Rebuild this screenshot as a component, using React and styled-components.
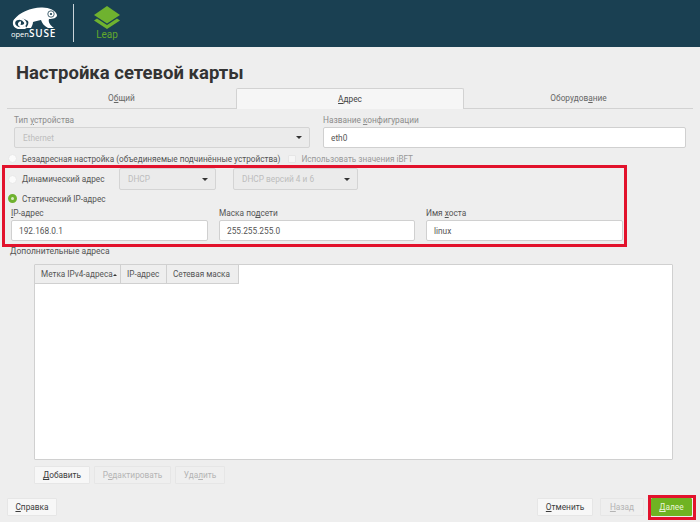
import React from 'react';
import styled, { createGlobalStyle } from 'styled-components';

const GlobalStyle = createGlobalStyle`
  html, body {
    margin: 0;
    padding: 0;
    background: #eeeeee;
    font-family: Roboto, "Noto Sans", sans-serif;
    color: #444;
  }
  * { box-sizing: border-box; }
`;

const Page = styled.div`
  position: relative;
  width: 700px;
  height: 522px;
  overflow: hidden;
  background: #eeeeee;
`;

const Header = styled.header`
  height: 47px;
  background: #1a4052;
  display: flex;
  align-items: flex-start;
  padding: 4px 0 0 11px;
`;

const SuseLogo = styled.div`
  width: 50px;
  padding-top: 3px;
  display: flex;
  flex-direction: column;
  align-items: flex-start;
`;

const SuseMark = styled.div`
  padding-left: 1px;
  height: 22px;
`;

const SuseWord = styled.div`
  font-family: "Open Sans", sans-serif;
  font-size: 7.5px;
  line-height: 8px;
  color: #fff;
  white-space: nowrap;
  b { font-size: 10px; font-weight: 600; letter-spacing: 0.8px; }
`;

const Divider = styled.div`
  width: 1px;
  height: 38px;
  background: #c9d3d8;
  margin-left: 12px;
`;

const LeapLogo = styled.div`
  margin-left: 20px;
  margin-top: 2px;
  width: 26px;
  display: flex;
  flex-direction: column;
  align-items: center;
`;

const LeapWord = styled.div`
  font-size: 10px;
  line-height: 12px;
  color: #62a82c;
`;

const Title = styled.h1`
  margin: 0;
  padding: 14px 0 0 16px;
  height: 41px;
  font-size: 18.5px;
  line-height: 25px;
  font-weight: 700;
  color: #333;
`;

const Tabs = styled.div`
  display: flex;
  height: 21px;
  margin: 0 7px;
`;

const Tab = styled.div`
  flex: ${({ $width }) => `0 0 ${$width}px`};
  display: flex;
  align-items: center;
  justify-content: center;
  font-size: 8.3px;
  color: ${({ $active }) => ($active ? '#444' : '#666')};
  background: ${({ $active }) => ($active ? '#f6f6f6' : 'transparent')};
  border: 1px solid #d2d2d2;
  border-width: ${({ $active }) => ($active ? '1px 1px 0 1px' : '0 0 1px 0')};
  border-radius: ${({ $active }) => ($active ? '2px 2px 0 0' : '0')};
`;

const Mn = styled.span`
  text-decoration: underline;
`;

const TopGrid = styled.div`
  display: flex;
  gap: 13px;
  padding: 5px 14px 0;
`;

const Field = styled.div`
  display: flex;
  flex-direction: column;
  width: ${({ $width }) => $width}px;
`;

const Label = styled.label`
  height: 13px;
  font-size: 8.3px;
  line-height: 13px;
  white-space: nowrap;
  color: ${({ $muted }) => ($muted ? '#8c8c8c' : '#555')};
`;

const TextBox = styled.div`
  height: 21px;
  background: #fff;
  border: 1px solid #d0d0d0;
  border-radius: 2px;
  display: flex;
  align-items: center;
  padding-left: 7px;
  font-size: 8.3px;
  color: #555;
`;

const SelectBox = styled.div`
  height: ${({ $height }) => $height || 21}px;
  width: ${({ $width }) => ($width ? `${$width}px` : 'auto')};
  background: #ebebeb;
  border: 1px solid #d4d4d4;
  border-radius: 2px;
  display: flex;
  align-items: center;
  justify-content: space-between;
  padding: 0 7px 0 8px;
  font-size: 8.3px;
  color: #bdbdbd;
`;

const Caret = styled.span`
  width: 0;
  height: 0;
  border-left: 3px solid transparent;
  border-right: 3px solid transparent;
  border-top: 3px solid #333;
`;

const OptionRow = styled.div`
  display: flex;
  align-items: center;
  height: ${({ $height }) => $height}px;
  padding: ${({ $pad }) => $pad || 0}px 0 0 8px;
`;

const Radio = styled.span`
  flex: none;
  width: 9px;
  height: 9px;
  border-radius: 50%;
  background: ${({ $on }) => ($on ? '#d9ecc4' : '#fbfbfb')};
  border: ${({ $on }) => ($on ? '3px solid #6fb22f' : '1px solid #e8e8e8')};
  margin-right: 5px;
`;

const Check = styled.span`
  flex: none;
  width: 8px;
  height: 8px;
  background: #f6f6f6;
  border: 1px solid #e6e6e6;
  border-radius: 1px;
  margin: 0 5px 0 8px;
`;

const OptionText = styled.span`
  font-size: 8.2px;
  white-space: nowrap;
  color: ${({ $muted }) => ($muted ? '#999' : '#555')};
  width: ${({ $width }) => ($width ? `${$width}px` : 'auto')};
`;

const DhcpGap = styled.div`
  width: 17px;
`;

const IpGrid = styled.div`
  display: flex;
  gap: 11px;
  padding: 0 0 0 11px;
`;

const ExtraLabel = styled.div`
  height: 14px;
  margin-top: 3px;
  padding-left: 10px;
  font-size: 8.5px;
  line-height: 14px;
  color: #555;
`;

const Table = styled.div`
  margin: 6px 0 0 34px;
  width: 639px;
  height: 196px;
  background: #fff;
  border: 1px solid #d0d0d0;
  border-radius: 1px;
`;

const TableHead = styled.div`
  display: flex;
  height: 19px;
`;

const HeadCell = styled.div`
  width: ${({ $width }) => $width}px;
  display: flex;
  align-items: center;
  padding-left: 6px;
  font-size: 8.2px;
  white-space: nowrap;
  color: #555;
  background: #eeeeee;
  border-right: 1px solid #d0d0d0;
  border-bottom: 1px solid #d0d0d0;
`;

const SortMark = styled.span`
  width: 0;
  height: 0;
  margin: 2px 0 0 0;
  border-left: 2px solid transparent;
  border-right: 2px solid transparent;
  border-bottom: 2px solid #333;
`;

const TableActions = styled.div`
  display: flex;
  gap: 4px;
  margin: 6px 0 0 34px;
`;

const Button = styled.button`
  width: ${({ $width }) => $width}px;
  height: 18px;
  padding: 0;
  font-family: inherit;
  font-size: 8.3px;
  color: ${({ $off }) => ($off ? '#b4b4b4' : '#3c3c3c')};
  background: ${({ $off }) => ($off ? '#efefef' : '#f7f7f7')};
  border: 1px solid #e6e6e6;
  border-radius: 1px;
`;

const NextButton = styled(Button)`
  color: #e8f3d8;
  background: #6fb322;
  border-color: #6fb322;
`;

const Footer = styled.div`
  display: flex;
  align-items: center;
  margin: 14px 0 0 7px;
  width: 685px;
`;

const FooterRight = styled.div`
  margin-left: auto;
  display: flex;
  gap: 7px;
`;

const RedFrame = styled.div`
  position: absolute;
  left: 2px;
  top: 165px;
  width: 625px;
  height: 82px;
  border: 3px solid #e2122c;
  pointer-events: none;
`;

const RedFrameNext = styled(RedFrame)`
  left: 648px;
  top: 495px;
  width: 48px;
  height: 25px;
`;

const Chameleon = () => (
  <svg width="46" height="22" viewBox="0 0 46 22">
    <path
      fill="#fff"
      d="M2 13 C7 5 19 1 29 0.500 C36 0 44 3 45 8 C45 11 41 12 37 12 C36 15 38 18 42 21 L36 21 C32 19 30 16 29 13 C26 14 23 14 21 15 C21 17 20 19 19 21 L14 21 C16 18 17 16 16 14 C12 11 6 10 2 13 Z"
    />
    <circle cx="39" cy="7" r="3.200" fill="none" stroke="#1a4052" strokeWidth="0.800" />
    <circle cx="39" cy="7" r="1.100" fill="#1a4052" />
    <path
      fill="none"
      stroke="#fff"
      strokeWidth="2.300"
      d="M14 20 C10 23 2 21 2 16 C2 11 10 10 13 15 C14.500 18 10 20 8 18.500 C6.500 17.500 7 15.500 9 15.500"
    />
  </svg>
);

const LeapMark = () => (
  <svg width="26" height="23" viewBox="0 0 26 23" style={{ display: 'block' }}>
    <path fill="#6fb22f" d="M13 0 L26 9 L13 17.500 L0 9 Z" />
    <path fill="#6fb22f" d="M3 12.500 L13 19 L23 12.500 L26 14.500 L13 23 L0 14.500 Z" />
  </svg>
);

const App = () => (
  <Page>
    <GlobalStyle />
    <Header>
      <SuseLogo>
        <SuseMark><Chameleon /></SuseMark>
        <SuseWord>open<b>SUSE</b></SuseWord>
      </SuseLogo>
      <Divider />
      <LeapLogo>
        <LeapMark />
        <LeapWord>Leap</LeapWord>
      </LeapLogo>
    </Header>

    <Title>Настройка сетевой карты</Title>

    <Tabs>
      <Tab $width={229}>О<Mn>б</Mn>щий</Tab>
      <Tab $width={228} $active><Mn>А</Mn>дрес</Tab>
      <Tab $width={229}>Оборудов<Mn>а</Mn>ние</Tab>
    </Tabs>

    <TopGrid>
      <Field $width={296}>
        <Label $muted>Тип <Mn>у</Mn>стройства</Label>
        <SelectBox>Ethernet<Caret /></SelectBox>
      </Field>
      <Field $width={363}>
        <Label $muted>Название <Mn>к</Mn>онфигурации</Label>
        <TextBox>eth0</TextBox>
      </Field>
    </TopGrid>

    <OptionRow $height={20} $pad={1}>
      <Radio />
      <OptionText>Безадресная настройка (объединяемые подчинённые устройства)</OptionText>
      <Check />
      <OptionText $muted>Использовать значения iBFT</OptionText>
    </OptionRow>

    <OptionRow $height={22}>
      <Radio />
      <OptionText $width={97}>Динамический адрес</OptionText>
      <SelectBox $width={97} $height={22}>DHCP<Caret /></SelectBox>
      <DhcpGap />
      <SelectBox $width={125} $height={22}>DHCP версий 4 и 6<Caret /></SelectBox>
    </OptionRow>

    <OptionRow $height={17}>
      <Radio $on />
      <OptionText>Статический IP-адрес</OptionText>
    </OptionRow>

    <IpGrid>
      <Field $width={197}>
        <Label><Mn>I</Mn>P-адрес</Label>
        <TextBox>192.168.0.1</TextBox>
      </Field>
      <Field $width={196}>
        <Label>Маска по<Mn>д</Mn>сети</Label>
        <TextBox>255.255.255.0</TextBox>
      </Field>
      <Field $width={197}>
        <Label>Имя <Mn>х</Mn>оста</Label>
        <TextBox>linux</TextBox>
      </Field>
    </IpGrid>

    <ExtraLabel>Дополнительные адреса</ExtraLabel>

    <Table>
      <TableHead>
        <HeadCell $width={86}>Метка IPv4-адреса<SortMark /></HeadCell>
        <HeadCell $width={46}>IP-адрес</HeadCell>
        <HeadCell $width={72}>Сетевая маска</HeadCell>
      </TableHead>
    </Table>

    <TableActions>
      <Button $width={56}><Mn>Д</Mn>обавить</Button>
      <Button $width={77} $off>Р<Mn>е</Mn>дактировать</Button>
      <Button $width={50} $off>Уда<Mn>л</Mn>ить</Button>
    </TableActions>

    <Footer>
      <Button $width={50}><Mn>С</Mn>правка</Button>
      <FooterRight>
        <Button $width={56}><Mn>О</Mn>тменить</Button>
        <Button $width={44} $off><Mn>Н</Mn>азад</Button>
        <NextButton $width={41}><Mn>Д</Mn>алее</NextButton>
      </FooterRight>
    </Footer>

    <RedFrame />
    <RedFrameNext />
  </Page>
);

export default App;
